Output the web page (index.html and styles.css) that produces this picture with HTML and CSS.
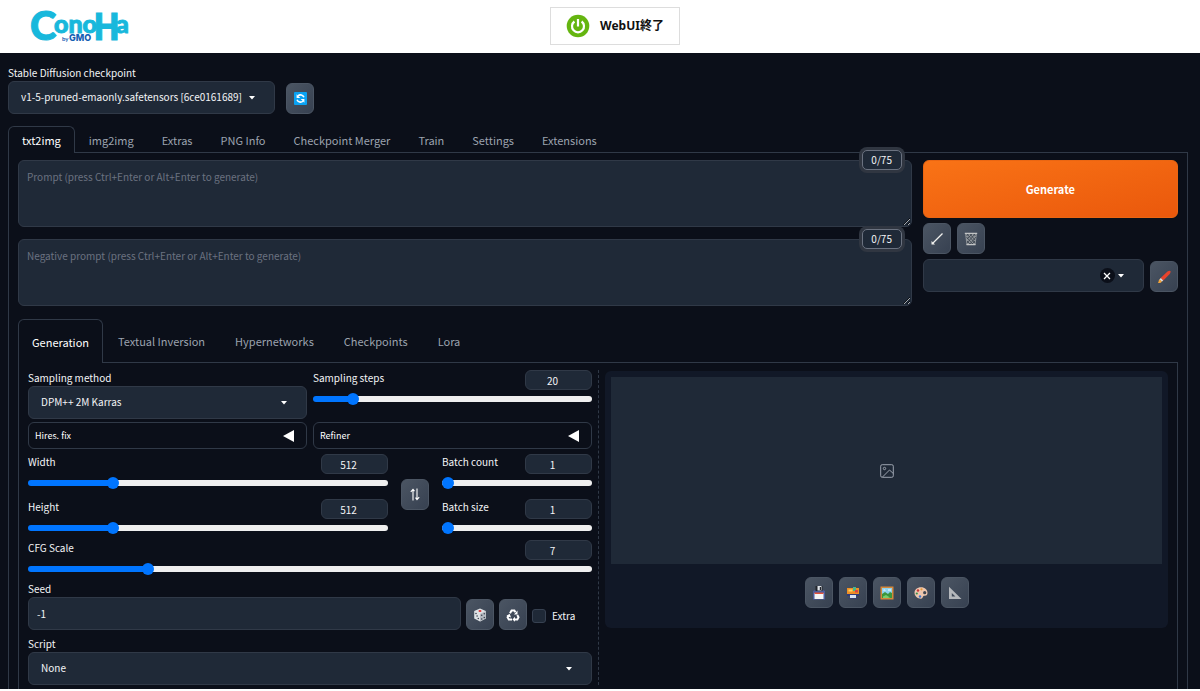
FILE: index.html
```
<!DOCTYPE html>
<html lang="en">
<head>
<meta charset="utf-8">
<meta name="viewport" content="width=device-width, initial-scale=1">
<title>Stable Diffusion WebUI</title>
<link rel="stylesheet" href="styles.css">
</head>
<body>
<header class="topbar">
  <a class="logo" href="#" aria-label="ConoHa by GMO">
    <svg width="104" height="38" viewBox="0 0 104 38" aria-hidden="true">
      <g class="logo-main">
        <text class="logo-c" x="0" y="33">C</text>
        <text class="logo-s" x="24" y="26">ono</text>
        <text class="logo-h" x="63" y="33">H</text>
        <text class="logo-s" x="86" y="26">a</text>
      </g>
      <text class="logo-by" x="32" y="34">by</text>
      <text class="logo-gmo" x="39" y="34">GMO</text>
    </svg>
  </a>
  <button class="quit" type="button">
    <svg width="24" height="24" viewBox="0 0 24 24" aria-hidden="true">
      <circle cx="12" cy="12" r="11.3" fill="#65b510"/>
      <path d="M8.4 7.5a6 6 0 1 0 7.2 0M12 5v7.5" fill="none" stroke="#fff" stroke-width="2.2"/>
    </svg>
    <span>WebUI終了</span>
  </button>
</header>

<main class="app">
  <div class="checkpoint">
    <div class="field">
      <label for="ckpt">Stable Diffusion checkpoint</label>
      <div class="pick">
        <select id="ckpt"><option>v1-5-pruned-emaonly.safetensors [6ce0161689]</option></select>
        <svg class="caret" viewBox="0 0 6 4" aria-hidden="true"><path d="M0 0h6L3 3.6z"/></svg>
      </div>
    </div>
    <button class="tool" type="button" aria-label="Refresh checkpoints">
      <svg width="13" height="13" viewBox="0 0 13 13" aria-hidden="true">
        <rect width="13" height="13" rx="1" fill="#0aa2f2"/>
        <path d="M10 5.3A3.8 3.8 0 0 0 4 3.8M3 7.7a3.8 3.8 0 0 0 6 1.5" fill="none" stroke="#fff" stroke-width="1.5"/>
        <path d="M2.6 2.3v3.8h3.7zM10.4 10.7V6.9H6.7z" fill="#fff"/>
      </svg>
    </button>
  </div>

  <nav class="tabs" aria-label="Main">
    <button class="tab on" type="button">txt2img</button>
    <button class="tab" type="button">img2img</button>
    <button class="tab" type="button">Extras</button>
    <button class="tab" type="button">PNG Info</button>
    <button class="tab" type="button">Checkpoint Merger</button>
    <button class="tab" type="button">Train</button>
    <button class="tab" type="button">Settings</button>
    <button class="tab" type="button">Extensions</button>
  </nav>

  <section class="panel">
    <div class="top">
      <div class="prompts">
        <div class="prompt">
          <textarea aria-label="Prompt" placeholder="Prompt (press Ctrl+Enter or Alt+Enter to generate)"></textarea>
          <span class="count">0/75</span>
        </div>
        <div class="prompt">
          <textarea aria-label="Negative prompt" placeholder="Negative prompt (press Ctrl+Enter or Alt+Enter to generate)"></textarea>
          <span class="count">0/75</span>
        </div>
      </div>
      <div class="actions">
        <button class="generate" type="button">Generate</button>
        <div class="tools">
          <button class="tool" type="button" aria-label="Read last parameters">
            <svg width="14" height="14" viewBox="0 0 14 14" aria-hidden="true"><path d="M12.5 1.5L3 11" stroke="#f2f2ef" stroke-width="1.3"/><path d="M1.5 9v3.5H5z" fill="#f2f2ef"/></svg>
          </button>
          <button class="tool" type="button" aria-label="Clear prompt">
            <svg width="14" height="14" viewBox="0 0 14 14" aria-hidden="true"><path d="M1 1h12l-1.500 12h-9z" fill="#8e9398"/><path d="M3 2l8 9M6 2l5 6M9.500 2l2 2M2.500 5l6 7M3 9l3 3M11 2l-8 9M8 2L3 7M4.500 2l-2 2M12 5l-6 7M11 9l-3 3" stroke="#39414d" stroke-width=".8"/><path d="M.8 1.300h12.400M2.500 12.700h9" stroke="#c2c4c5" stroke-width="1.200"/></svg>
          </button>
        </div>
        <div class="styles">
          <div class="pick">
            <select aria-label="Styles"><option></option></select>
            <button class="clear" type="button" aria-label="Clear styles"><svg width="8" height="8" viewBox="0 0 8 8" aria-hidden="true"><path d="M1 1l6 6M7 1L1 7" stroke="#fff" stroke-width="1.300"/></svg></button>
            <svg class="caret" viewBox="0 0 6 4" aria-hidden="true"><path d="M0 0h6L3 3.600z"/></svg>
          </div>
          <button class="tool" type="button" aria-label="Edit styles">
            <svg width="14" height="14" viewBox="0 0 14 14" aria-hidden="true"><path d="M3.600 8L10.500 1.500q2-1.200 2.800-.4t-.6 2.800L6.300 10.600z" fill="#e8432c"/><path d="M3.800 7.900l2.400 2.500-1.400 1.300-2.400-2.200z" fill="#d9dde0"/><path d="M2.700 9.200l2.200 2.200Q4 13.400.8 12.800q1.100-1 .9-2.400z" fill="#f4a53a"/></svg>
          </button>
        </div>
      </div>
    </div>

    <nav class="tabs inner" aria-label="Generation">
      <button class="tab on" type="button">Generation</button>
      <button class="tab" type="button">Textual Inversion</button>
      <button class="tab" type="button">Hypernetworks</button>
      <button class="tab" type="button">Checkpoints</button>
      <button class="tab" type="button">Lora</button>
    </nav>

    <div class="panel work">
      <form class="settings">
        <div class="pair">
          <div class="field">
            <label for="method">Sampling method</label>
            <div class="pick">
              <select id="method"><option>DPM++ 2M Karras</option></select>
              <svg class="caret" viewBox="0 0 6 4" aria-hidden="true"><path d="M0 0h6L3 3.600z"/></svg>
            </div>
          </div>
          <div class="slider">
            <div class="head"><label for="steps">Sampling steps</label><input type="number" aria-label="Sampling steps value" value="20"></div>
            <input type="range" id="steps" min="1" max="150" value="20" style="--fill:14%">
          </div>
        </div>
        <div class="pair folds">
          <details class="fold"><summary>Hires. fix<svg width="11" height="12" viewBox="0 0 11 12" aria-hidden="true"><path d="M11 0v12L0 6z" fill="#fff"/></svg></summary></details>
          <details class="fold"><summary>Refiner<svg width="11" height="12" viewBox="0 0 11 12" aria-hidden="true"><path d="M11 0v12L0 6z" fill="#fff"/></svg></summary></details>
        </div>
        <div class="dims">
          <div class="stack">
            <div class="slider">
              <div class="head"><label for="w">Width</label><input type="number" aria-label="Width value" value="512"></div>
              <input type="range" id="w" min="64" max="2048" value="512" style="--fill:24%">
            </div>
            <div class="slider">
              <div class="head"><label for="h">Height</label><input type="number" aria-label="Height value" value="512"></div>
              <input type="range" id="h" min="64" max="2048" value="512" style="--fill:24%">
            </div>
          </div>
          <button class="tool" type="button" aria-label="Swap width and height">
            <svg width="10" height="13" viewBox="0 0 10 13" aria-hidden="true"><path d="M3 12.500V1.500M.8 3.800L3 1.300l1.500 1.800M7 .5v11M5.500 9.700L7 11.700l2.200-2.500" fill="none" stroke="#fff" stroke-width="1.100"/></svg>
          </button>
          <div class="stack">
            <div class="slider">
              <div class="head"><label for="bc">Batch count</label><input type="number" aria-label="Batch count value" value="1"></div>
              <input type="range" id="bc" min="1" max="100" value="1" style="--fill:0%">
            </div>
            <div class="slider">
              <div class="head"><label for="bs">Batch size</label><input type="number" aria-label="Batch size value" value="1"></div>
              <input type="range" id="bs" min="1" max="8" value="1" style="--fill:0%">
            </div>
          </div>
        </div>
        <div class="slider cfg">
          <div class="head"><label for="cfg">CFG Scale</label><input type="number" aria-label="CFG Scale value" value="7"></div>
          <input type="range" id="cfg" min="1" max="30" step="0.5" value="7" style="--fill:21%">
        </div>
        <div class="seed">
          <div class="field grow">
            <label for="seed">Seed</label>
            <input class="text" type="text" id="seed" value="-1">
          </div>
          <button class="tool" type="button" aria-label="Random seed">
            <svg width="14" height="14" viewBox="0 0 14 14" aria-hidden="true"><path d="M7 .5l5.800 2.500v7.500L7 13.500 1.200 10.500V3z" fill="#dfe2e5"/><path d="M7 6l5.800-3v7.500L7 13.500z" fill="#b5bac2"/><ellipse cx="7" cy="3" rx="1.500" ry="1" fill="#d33"/><g fill="#3c4350"><circle cx="3" cy="5.500" r=".8"/><circle cx="5.300" cy="10.500" r=".8"/><circle cx="4.100" cy="8" r=".8"/><circle cx="8.700" cy="7.300" r=".8"/><circle cx="11.300" cy="5.800" r=".8"/><circle cx="8.700" cy="11" r=".8"/><circle cx="11.300" cy="9.500" r=".8"/></g></svg>
          </button>
          <button class="tool" type="button" aria-label="Reuse seed">
            <svg width="14" height="14" viewBox="0 0 14 14" aria-hidden="true"><g fill="none" stroke="#fff" stroke-width="2"><path d="M4 5.200L5.600 2.500h2.800l1 1.700"/><path d="M11.300 7l1.200 2.200-1.200 2.200H8.600"/><path d="M6 11.400H2.800L1.600 9.300l1-1.700"/></g><path d="M11.500 2.500v4H8zM9 8.800v5L6.400 11.400zM.4 8L3.600 5.800l1.500 3.700z" fill="#fff"/></svg>
          </button>
          <label class="extra"><input type="checkbox"><span>Extra</span></label>
        </div>
        <div class="field script">
          <label for="script">Script</label>
          <div class="pick">
            <select id="script"><option>None</option></select>
            <svg class="caret" viewBox="0 0 6 4" aria-hidden="true"><path d="M0 0h6L3 3.600z"/></svg>
          </div>
        </div>
      </form>

      <section class="output" aria-label="Output">
        <div class="preview">
          <svg width="14" height="14" viewBox="0 0 14 14" fill="none" stroke="#9ca3af" aria-hidden="true"><rect x=".7" y=".7" width="12.600" height="12.600" rx="1.500"/><circle cx="4.500" cy="4.500" r="1.200"/><path d="M2.500 13L9.500 6l3.800 3.500"/></svg>
        </div>
        <div class="tools">
          <button class="tool" type="button" aria-label="Save">
            <svg width="14" height="14" viewBox="0 0 14 14" aria-hidden="true"><path d="M1 5l2-1h8l2 1v8.500H1z" fill="#4e5d9c"/><path d="M3.500 0h7v5h-7z" fill="#23262d"/><path d="M5.500 0h4v4.500h-4z" fill="#dfe3e8"/><path d="M7.800 1h1.200v3H7.800z" fill="#23262d"/><path d="M2.500 7h9v6h-9z" fill="#f5f5f5"/><path d="M2.500 6.500h9V8h-9z" fill="#e4523b"/></svg>
          </button>
          <button class="tool" type="button" aria-label="Save zip">
            <svg width="14" height="14" viewBox="0 0 14 14" aria-hidden="true"><path d="M1 2h12v7H1z" fill="#ef8f25"/><path d="M2.500 3.500h4v2h-4z" fill="#ffd45c"/><path d="M7 1h3v4H7z" fill="#47b58c"/><path d="M9 4h3v2.500H9z" fill="#d84747"/><path d="M1 8h12v2H1z" fill="#303b78"/><path d="M4 9h6v3H4z" fill="#d8e4f5"/><path d="M2 12h10v1H2z" fill="#363f70"/></svg>
          </button>
          <button class="tool" type="button" aria-label="Send to img2img">
            <svg width="14" height="14" viewBox="0 0 14 14" aria-hidden="true"><rect x=".5" y=".5" width="13" height="13" fill="#d4883a"/><path d="M2 2h10v10H2z" fill="#8fd3ee"/><path d="M3 4.500q1-2 3 0zM8 3.500h3v1H8z" fill="#fff"/><path d="M2 8l3-2 3 2 2-2 2 1v5H2z" fill="#3d963e"/><path d="M3 10.500l3-1.500 4 2.500-2 .5H3z" fill="#78cf6d"/></svg>
          </button>
          <button class="tool" type="button" aria-label="Send to inpaint">
            <svg width="14" height="14" viewBox="0 0 14 14" aria-hidden="true"><path d="M7 1.200c4 0 6.500 2.500 6.500 5.500s-2 3-3.500 3-.8 3-3 3C3.500 12.700.5 10 .5 6.800S3.200 1.200 7 1.200z" fill="#eec6ae"/><circle cx="4" cy="4.500" r="1.200" fill="#c93535"/><circle cx="7.500" cy="3.300" r="1.100" fill="#e89a31"/><circle cx="2.800" cy="7.500" r="1.100" fill="#398d4c"/><circle cx="6" cy="10.500" r="1.200" fill="#3c70c8"/><circle cx="10.700" cy="6.700" r="1.600" fill="#3f4753"/></svg>
          </button>
          <button class="tool" type="button" aria-label="Send to extras">
            <svg width="14" height="14" viewBox="0 0 14 14" aria-hidden="true"><path d="M1 .8L13.500 13H1zM3.800 7v3.500h3.600z" fill="#b5b8bc" fill-rule="evenodd"/></svg>
          </button>
        </div>
      </section>
    </div>
  </section>
</main>
</body>
</html>
```
FILE: styles.css
```
*, *::before, *::after { box-sizing: border-box; }

:root {
  --bg: #0b0f19;
  --field: #1f2937;
  --line: #303947;
  --muted: #9ca3af;
  --blue: #0075ff;
}

body {
  margin: 0;
  background: #fff;
  color: #f3f4f6;
  font: 400 10px/16px "Noto Sans CJK JP", "Open Sans", sans-serif;
}

button, input, select, textarea { font: inherit; color: inherit; margin: 0; }
button { padding: 0; cursor: pointer; }
svg { display: block; flex: none; }
label { display: block; }

/* Top bar */
.topbar {
  display: grid;
  grid-template-columns: 1fr auto 1fr;
  align-items: center;
  padding: 7px 0 8px 30px;
  background: #fff;
}
.logo { justify-self: start; }
.logo svg { overflow: visible; }
.logo-main { fill: #18b8dc; stroke: #18b8dc; stroke-width: 1; font-family: Lato, sans-serif; font-weight: 900; }
.logo-c { font-size: 40px; }
.logo-s { font-size: 25px; }
.logo-h { font-family: "Noto Sans CJK JP", sans-serif; font-size: 36px; font-weight: 700; }
.logo-by { fill: #1560b3; font: 700 6px Lato, sans-serif; }
.logo-gmo { fill: #1560b3; font: 800 9px Inter, sans-serif; }
.quit {
  display: flex;
  align-items: center;
  gap: 10px;
  height: 38px;
  padding: 0 15px 1px;
  border: 1px solid #ddd;
  background: #fff;
  color: #111;
  font: 700 12px/18px "Noto Sans", "Noto Sans CJK JP", sans-serif;
}

/* Page */
.app { background: var(--bg); padding: 12px 12px 0 8px; }
.checkpoint { display: flex; align-items: flex-end; gap: 11px; margin-bottom: 12px; }

.pick { position: relative; }
.pick select {
  display: block;
  width: 100%;
  height: 33px;
  padding: 0 32px 1px 12px;
  border: 1px solid var(--line);
  border-radius: 6px;
  background: var(--field);
  appearance: none;
}
.caret { position: absolute; right: 20px; top: 15px; width: 6px; height: 4px; fill: #fff; }

.tool {
  display: grid;
  place-items: center;
  flex: none;
  width: 28px;
  height: 31px;
  border: 1px solid #4b5563;
  border-radius: 6px;
  background: linear-gradient(to bottom right, #4b5563, #374151);
}

/* Tabs */
.tabs { display: flex; }
.tab {
  height: 26px;
  padding: 0 13px;
  border: 1px solid transparent;
  border-bottom: 0;
  border-radius: 6px 6px 0 0;
  background: none;
  color: var(--muted);
  font-size: 11px;
  white-space: nowrap;
}
.tab.on {
  position: relative;
  margin-bottom: -1px;
  height: 27px;
  border-color: var(--line);
  background: var(--bg);
  color: #fff;
}
.inner { margin-top: 13px; }
.inner .tab { height: 43px; }
.inner .tab.on { height: 44px; }
.inner .tab + .tab { padding: 0 14px; }
.panel { border: 1px solid var(--line); border-bottom: 0; padding: 7px 9px 0; }

/* Prompt area */
.top { display: grid; grid-template-columns: 7fr 2fr; gap: 11px; }
.prompts { display: grid; gap: 12px; }
.prompt { position: relative; }
.prompt textarea {
  display: block;
  width: 100%;
  height: 67px;
  padding: 8px;
  border: 1px solid var(--line);
  border-radius: 6px;
  background: var(--field);
  resize: vertical;
  color-scheme: dark;
}
.prompt textarea::placeholder { color: #6b7280; }
.count {
  position: absolute;
  top: -10px;
  right: 10px;
  width: 40px;
  border: 1px solid #6b7280;
  border-radius: 5px;
  background: var(--field);
  box-shadow: 0 0 0 3px #303641;
  line-height: 18px;
  text-align: center;
}
.actions { display: flex; flex-direction: column; gap: 5px; }
.generate {
  height: 58px;
  border: 1px solid #ea6612;
  border-radius: 6px;
  background: linear-gradient(to bottom right, #f97316, #ea580c);
  color: #fff;
  font-size: 11px;
  font-weight: 700;
}
.tools { display: flex; gap: 6px; }
.styles { display: flex; align-items: flex-end; gap: 6px; }
.styles .pick { flex: 1; }
.clear {
  position: absolute;
  right: 29px;
  top: 9px;
  display: grid;
  place-items: center;
  width: 15px;
  height: 15px;
  border: 0;
  border-radius: 50%;
  background: var(--bg);
}

/* Generation settings */
.work { display: grid; grid-template-columns: 71fr 70fr; gap: 6px; padding-bottom: 4px; }
.settings { border-right: 1px dashed var(--line); padding-right: 6px; }
.pair { display: grid; grid-template-columns: 1fr 1fr; gap: 6px; }
.folds { margin: 3px 0 5px; }
.fold { border: 1px solid var(--line); border-radius: 6px; }
.fold summary {
  display: flex;
  align-items: center;
  justify-content: space-between;
  height: 25px;
  padding: 0 12px 0 6px;
  color: #fff;
  font-size: 9px;
  list-style: none;
}

.head { display: flex; justify-content: space-between; height: 20px; }
.head input {
  width: 67px;
  height: 20px;
  padding: 0 12px 0 0;
  border: 1px solid var(--line);
  border-radius: 6px;
  background: var(--field);
  text-align: center;
  appearance: textfield;
}
.head input::-webkit-inner-spin-button { display: none; }
.slider input[type="range"] {
  display: block;
  width: 100%;
  height: 12px;
  margin-top: 3px;
  background: none;
  appearance: none;
}
.slider input::-webkit-slider-runnable-track {
  height: 6px;
  border-radius: 3px;
  background: linear-gradient(to right, var(--blue) var(--fill), #efefef var(--fill));
}
.slider input::-webkit-slider-thumb {
  appearance: none;
  width: 12px;
  height: 12px;
  margin-top: -3px;
  border-radius: 50%;
  background: var(--blue);
}

.dims { display: grid; grid-template-columns: 12fr 28px 5fr; gap: 13px; align-items: center; }
.stack { display: grid; gap: 10px; }
.cfg { margin: 6px 0; }
.seed { display: flex; align-items: flex-end; gap: 5px; }
.grow { flex: 1; }
.text {
  display: block;
  width: 100%;
  height: 33px;
  padding: 0 8px 1px;
  border: 1px solid var(--line);
  border-radius: 6px;
  background: var(--field);
}
.extra { display: flex; align-items: center; gap: 6px; width: 60px; height: 28px; }
.extra input {
  width: 14px;
  height: 14px;
  border: 1px solid #374151;
  border-radius: 3px;
  background: var(--field);
  appearance: none;
}
.script { margin-top: 6px; }

/* Output */
.output { align-self: start; margin-top: 1px; padding: 6px 6px 20px; border-radius: 6px; background: #111827; }
.preview { display: grid; place-items: center; min-height: 187px; background: var(--field); }
.output .tools { justify-content: center; margin-top: 13px; }
```
